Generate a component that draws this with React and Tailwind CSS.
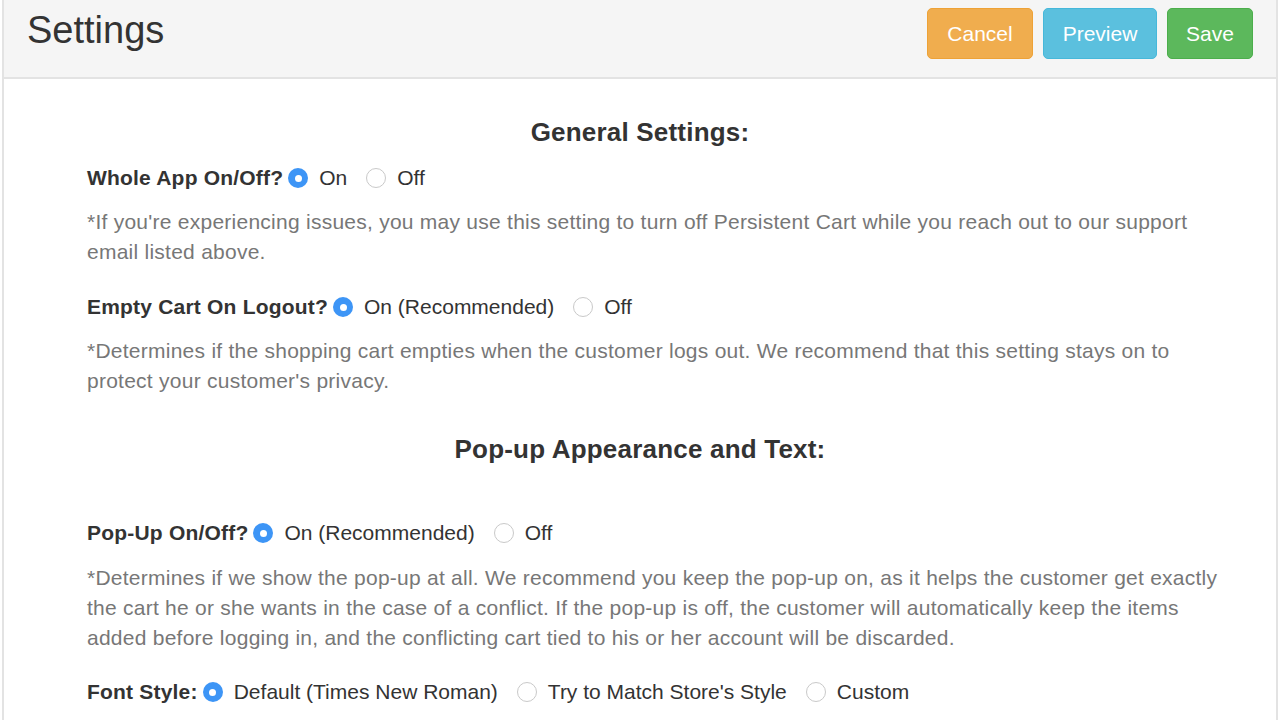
import React from "react";

const font = { fontFamily: '"Liberation Sans", Arial, sans-serif' };

const Radio = ({ checked }) => (
  <span
    className={
      checked
        ? "flex h-[20px] w-[20px] shrink-0 items-center justify-center rounded-full bg-[#3d95f6]"
        : "flex h-[20px] w-[20px] shrink-0 items-center justify-center rounded-full border border-[#c9c9c9] bg-white"
    }
  >
    {checked && <span className="h-[7px] w-[7px] rounded-full bg-white" />}
  </span>
);

const OptionRow = ({ label, options, className = "" }) => (
  <div className={`flex h-[30px] items-center text-[21px] ${className}`}>
    <span className="mr-[5px] font-bold tracking-[0.2px] text-[#333]">{label}</span>
    {options.map((opt, i) => (
      <label key={opt.text} className={`flex items-center ${i > 0 ? "ml-[19px]" : ""}`}>
        <Radio checked={opt.checked} />
        <span className="ml-[11px] text-[#333]">{opt.text}</span>
      </label>
    ))}
  </div>
);

const Note = ({ children, className = "" }) => (
  <p className={`-mr-[70px] whitespace-nowrap text-[21px] leading-[30px] tracking-[0.25px] text-[#777] ${className}`}>
    {children}
  </p>
);

const SectionTitle = ({ children, className = "" }) => (
  <h2 className={`text-center text-[26px] font-bold leading-[36px] tracking-[0.2px] text-[#333] ${className}`}>{children}</h2>
);

export default function App() {
  return (
    <div className="min-h-screen bg-white" style={font}>
      <div className="mx-[2px] min-h-[720px] border-x-2 border-[#e3e3e3]">
        <header className="flex h-[79px] items-start justify-between border-b-2 border-[#e3e3e3] bg-[#f5f5f5] pl-[23px] pr-[23px]">
          <h1 className="mt-[9px] text-[38px] leading-[42px] text-[#333]">Settings</h1>
          <div className="mt-[8px] flex gap-[10px]">
            <button className="h-[51px] w-[106px] rounded-[5px] border border-[#eea236] bg-[#f0ad4e] text-[21px] text-white">
              Cancel
            </button>
            <button className="h-[51px] w-[114px] rounded-[5px] border border-[#46b8da] bg-[#5bc0de] text-[21px] text-white">
              Preview
            </button>
            <button className="h-[51px] w-[86px] rounded-[5px] border border-[#4cae4c] bg-[#5cb85c] text-[21px] text-white">
              Save
            </button>
          </div>
        </header>

        <main className="px-[83px] pt-[35px]">
          <SectionTitle>General Settings:</SectionTitle>

          <OptionRow
            className="mt-[13px]"
            label="Whole App On/Off?"
            options={[
              { text: "On", checked: true },
              { text: "Off", checked: false },
            ]}
          />
          <Note className="mt-[14px]">
            *If you're experiencing issues, you may use this setting to turn off Persistent Cart while you reach out to our support
            <br />
            email listed above.
          </Note>

          <OptionRow
            className="mt-[25px]"
            label="Empty Cart On Logout?"
            options={[
              { text: "On (Recommended)", checked: true },
              { text: "Off", checked: false },
            ]}
          />
          <Note className="mt-[14px]">
            *Determines if the shopping cart empties when the customer logs out. We recommend that this setting stays on to
            <br />
            protect your customer's privacy.
          </Note>

          <SectionTitle className="mt-[35px]">Pop-up Appearance and Text:</SectionTitle>

          <OptionRow
            className="mt-[51px]"
            label="Pop-Up On/Off?"
            options={[
              { text: "On (Recommended)", checked: true },
              { text: "Off", checked: false },
            ]}
          />
          <Note className="mt-[15px]">
            *Determines if we show the pop-up at all. We recommend you keep the pop-up on, as it helps the customer get exactly
            <br />
            the cart he or she wants in the case of a conflict. If the pop-up is off, the customer will automatically keep the items
            <br />
            added before logging in, and the conflicting cart tied to his or her account will be discarded.
          </Note>

          <OptionRow
            className="mt-[24px]"
            label="Font Style:"
            options={[
              { text: "Default (Times New Roman)", checked: true },
              { text: "Try to Match Store's Style", checked: false },
              { text: "Custom", checked: false },
            ]}
          />
        </main>
      </div>
    </div>
  );
}
